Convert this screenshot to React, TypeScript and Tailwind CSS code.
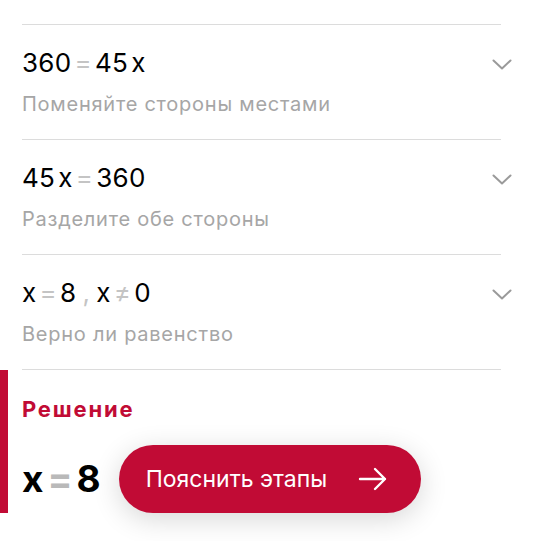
import React from "react";

const Chevron = () => (
  <svg width="20" height="12" viewBox="0 0 20 12" fill="none">
    <path d="M1.5 1.5 L10 9.5 L18.5 1.5" stroke="#9a9a9a" strokeWidth="2" strokeLinecap="round" strokeLinejoin="round" />
  </svg>
);

const Eq = ({ children }: { children: React.ReactNode }) => (
  <span className="text-[#c4c4c4] mx-[3px]">{children}</span>
);

const Row = ({ eq, sub }: { eq: React.ReactNode; sub: string }) => (
  <div>
    <div className="ml-[22px] w-[479px] h-px bg-[#dcdcdc]" />
    <div className="h-[114px] pl-[22px] pr-[27px] flex justify-between">
      <div className="pt-[23px]">
        <div className="text-[26px] leading-[30px] text-black tracking-[0.3px]">{eq}</div>
        <div className="mt-[14px] text-[20px] leading-[24px] text-[#a6a6a6] tracking-[0.75px]">{sub}</div>
      </div>
      <div className="pt-[34px]">
        <Chevron />
      </div>
    </div>
  </div>
);

export default function App() {
  return (
    <div
      className="w-[539px] h-[541px] bg-white overflow-hidden"
      style={{ fontFamily: "Inter, 'Noto Sans', sans-serif" }}
    >
      <div className="h-[24px]" />
      <Row
        eq={
          <>
            360<Eq>=</Eq>45<span className="ml-[3px]">x</span>
          </>
        }
        sub="Поменяйте стороны местами"
      />
      <Row
        eq={
          <>
            45<span className="ml-[3px]">x</span>
            <Eq>=</Eq>360
          </>
        }
        sub="Разделите обе стороны"
      />
      <Row
        eq={
          <>
            x<Eq>=</Eq>8<span className="text-[#c4c4c4] mx-[6px]">,</span>x<Eq>≠</Eq>0
          </>
        }
        sub="Верно ли равенство"
      />
      <div className="ml-[22px] w-[479px] h-px bg-[#dcdcdc]" />
      <div className="flex h-[143px]">
        <div className="w-[8px] h-[143px] bg-[#c10b35] shrink-0" />
        <div className="pl-[14px] flex flex-col">
          <div className="pt-[26px] text-[22px] leading-[26px] font-bold text-[#c10b35] tracking-[1.8px]">Решение</div>
          <div className="mt-[23px] flex items-center">
            <div className="text-[37px] leading-[68px] font-bold text-black flex items-center">
              x<span className="text-[#b9b9b9] mx-[4px]">=</span>8
            </div>
            <button className="ml-[18px] w-[302px] h-[68px] rounded-full bg-[#c10b35] shadow-[0_6px_28px_rgba(0,0,0,0.16)] flex items-center pl-[27px] text-white text-[23px]">
              <span>Пояснить этапы</span>
              <svg className="ml-[31px]" width="30" height="24" viewBox="0 0 30 24" fill="none">
                <path d="M2 12 H27 M17 2 L27 12 L17 22" stroke="white" strokeWidth="2.4" strokeLinecap="round" strokeLinejoin="round" />
              </svg>
            </button>
          </div>
        </div>
      </div>
    </div>
  );
}
